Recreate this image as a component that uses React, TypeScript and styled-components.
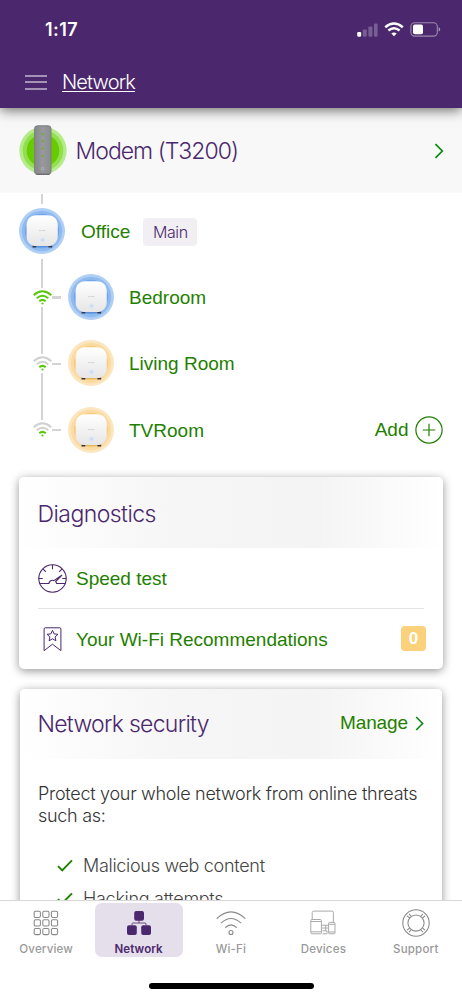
import React from "react";
import styled, { createGlobalStyle, css } from "styled-components";

const purple = "#4b286d";
const green = "#1f8000";

const GlobalStyle = createGlobalStyle`
  * { box-sizing: border-box; }
  html, body { margin: 0; padding: 0; background: #fff; }
  body { overflow: hidden; font-family: "Liberation Sans", Arial, sans-serif; }
  svg { display: block; flex: none; }
`;

const light = css`
  font-family: Inter, "Liberation Sans", sans-serif;
  font-weight: 300;
`;

const Screen = styled.div`
  width: 462px;
  height: 999px;
  display: flex;
  flex-direction: column;
  overflow: hidden;
  background: #fff;
`;

const Header = styled.header`
  flex: none;
  height: 108px;
  background: ${purple};
  box-shadow: 0 2px 12px rgba(0, 0, 0, 0.6);
  z-index: 2;
  color: #fff;
`;

const StatusBar = styled.div`
  height: 58px;
  padding: 1px 21px 0 45px;
  display: flex;
  align-items: center;
  justify-content: space-between;
`;

const Time = styled.span`
  font: 600 18px/20px Inter, sans-serif;
  letter-spacing: 0.4px;
`;

const StatusIcons = styled.div`
  display: flex;
  align-items: center;
  gap: 6px;
`;

const TitleBar = styled.div`
  display: flex;
  align-items: center;
  height: 48px;
  padding-left: 25px;
  gap: 15px;
`;

const Burger = styled.div`
  width: 22px;
  height: 15px;
  display: flex;
  flex-direction: column;
  justify-content: space-between;
`;

const BurgerLine = styled.i`
  height: 2px;
  background: #a593b6;
`;

const PageTitle = styled.h1`
  ${light}
  margin: 0;
  font-size: 20px;
  line-height: 24px;
  letter-spacing: -0.85px;
  text-decoration: underline;
  text-decoration-thickness: 1px;
  text-underline-offset: 2px;
`;

const Content = styled.main`
  flex: 1;
  min-height: 0;
  overflow: hidden;
`;

const ModemRow = styled.section`
  height: 85px;
  padding: 0 18px 0 19px;
  display: flex;
  align-items: center;
  background: #f8f8f8;
`;

const ModemName = styled.h2`
  ${light}
  flex: 1;
  margin: 1px 0 0 8.500px;
  color: ${purple};
  font-size: 23px;
  line-height: 28px;
  letter-spacing: -0.980px;
`;

const Tree = styled.section`
  height: 284px;
  padding: 1px 19px 0 19px;
`;

const RailLine = styled.i<{ $h: number }>`
  display: block;
  width: 2.4px;
  height: ${(p) => p.$h}px;
  background: #d4d4d4;
`;

const TopLink = styled.div`
  height: 14px;
  padding-left: 22px;
`;

const MainNode = styled.div`
  height: 46px;
  display: flex;
  align-items: center;
`;

const NodeName = styled.span<{ $gap: number }>`
  margin-left: ${(p) => p.$gap}px;
  padding-top: 2px;
  font-size: 19px;
  line-height: 24px;
  color: ${green};
`;

const MainTag = styled.span`
  ${light}
  margin: 1px 0 0 13px;
  width: 54px;
  height: 28px;
  border-radius: 4px;
  background: #f2eff4;
  color: ${purple};
  font-size: 16px;
  line-height: 28px;
  text-align: center;
  letter-spacing: -0.4px;
`;

const Branches = styled.div`
  display: flex;
  padding-top: 5px;
`;

const Rail = styled.div`
  width: 49px;
  padding-left: 14px;
`;

const RailStem = styled.div`
  padding-left: 8px;
`;

const WifiLink = styled.div`
  height: 19px;
  display: flex;
  align-items: center;
`;

const Tick = styled.i`
  width: 9px;
  height: 2.4px;
  margin: 1px 0 0 0;
  background: #d4d4d4;
`;

const Rooms = styled.div`
  flex: 1;
  padding-top: 5px;
`;

const RoomRow = styled.div`
  height: 66.3px;
  padding-bottom: 0.3px;
  display: flex;
  align-items: center;
`;

const AddLink = styled.span`
  margin-left: auto;
  padding-right: 0.5px;
  display: flex;
  align-items: center;
  gap: 6px;
  font-size: 19px;
  line-height: 26px;
  color: ${green};
`;

const Card = styled.section<{ $inset?: boolean }>`
  margin: 0 ${(p) => (p.$inset ? "20px 20px 20px" : "19px 20px 19px")};
  height: ${(p) => (p.$inset ? 320 : 192)}px;
  border-radius: 5px;
  background: #fff;
  box-shadow: 0 2px 10px rgba(0, 0, 0, 0.42);
  overflow: hidden;
`;

const CardHead = styled.div<{ $side: number; $top: number; $h: number }>`
  height: ${(p) => p.$h}px;
  padding: ${(p) => p.$top}px ${(p) => p.$side}px 0;
  display: flex;
  align-items: center;
  justify-content: space-between;
  background: linear-gradient(90deg, #fff 0%, #f6f6f6 36%, #f4f4f4 70%, #fff 100%);
`;

const CardTitle = styled.h2<{ $track: number }>`
  ${light}
  margin: 0 0 0 -0.5px;
  font-size: 23px;
  line-height: 28px;
  letter-spacing: ${(p) => p.$track}px;
  color: ${purple};
`;

const ActionRow = styled.div`
  height: 61px;
  margin: 0 19px;
  display: flex;
  align-items: center;
  border-bottom: 1px solid #e4e4e4;
`;

const IconSlot = styled.div`
  width: 38px;
  flex: none;
`;

const ActionText = styled.span`
  padding-top: 2px;
  font-size: 19px;
  line-height: 24px;
  color: ${green};
`;

const CountBadge = styled.span`
  width: 25px;
  height: 25px;
  margin: -1px -2px 0 auto;
  border-radius: 4px;
  background: #fcd17b;
  color: #fff;
  font-size: 17px;
  font-weight: 700;
  line-height: 26px;
  text-align: center;
`;

const Manage = styled.span`
  display: flex;
  align-items: center;
  gap: 7px;
  margin-top: -2px;
  font-size: 19px;
  line-height: 24px;
  letter-spacing: -0.1px;
  color: ${green};
`;

const Intro = styled.p`
  ${light}
  margin: 24px 10px 0 18px;
  font-size: 18px;
  line-height: 22px;
  letter-spacing: -0.280px;
  color: #333;
  white-space: pre-line;
`;

const Threats = styled.ul`
  margin: 22px 0 0;
  padding: 0 0 0 37px;
  list-style: none;
`;

const Threat = styled.li`
  ${light}
  height: 33px;
  display: flex;
  align-items: center;
  gap: 10px;
  font-size: 18px;
  line-height: 24px;
  letter-spacing: -0.300px;
  color: #444;
`;

const TabBar = styled.nav`
  flex: none;
  height: 99px;
  border-top: 1px solid #d8d8d8;
  background: #fff;
  z-index: 2;
`;

const Tabs = styled.div`
  display: grid;
  grid-template-columns: repeat(5, 1fr);
  height: 79px;
  padding-top: 2px;
`;

const Tab = styled.div<{ $active?: boolean }>`
  width: 88px;
  height: 54px;
  margin: 0 auto;
  border-radius: 7px;
  display: flex;
  flex-direction: column;
  align-items: center;
  background: ${(p) => (p.$active ? "#e5deeb" : "transparent")};
  color: ${(p) => (p.$active ? purple : "#999")};
  font: ${(p) => (p.$active ? 600 : 500)} 11.500px/16px Inter, sans-serif;
  letter-spacing: ${(p) => (p.$active ? 0.1 : 0.2)}px;
`;

const TabIcon = styled.div`
  height: 39px;
  padding-top: 2px;
  margin-bottom: 1px;
  display: flex;
  align-items: center;
`;

const HomeIndicator = styled.div`
  width: 165px;
  height: 6px;
  margin: 3px auto 0;
  border-radius: 3px;
  background: #000;
`;

const Chevron = ({ w = 9, h = 15 }: { w?: number; h?: number }) => (
  <svg width={w} height={h} viewBox="0 0 9 15" fill="none" stroke="#078a12" strokeWidth="1.6">
    <path d="M1.2 1 7.6 7.5 1.2 14" />
  </svg>
);

const Signal = () => (
  <svg width="21" height="14" viewBox="0 0 21 14" fill="#fff">
    <rect x="0.2" y="9" width="4" height="4.7" rx="1.1" />
    <g opacity="0.25">
      <rect x="5.8" y="6.5" width="4" height="7.2" rx="1.1" />
      <rect x="11.4" y="3.5" width="4" height="10.2" rx="1.1" />
      <rect x="17" y="0.5" width="3.6" height="13.2" rx="1.1" />
    </g>
  </svg>
);

const StatusWifi = () => (
  <svg width="20" height="15" viewBox="0 0 20 15" fill="none" stroke="#fff" strokeWidth="2.5">
    <path d="M1.2 5.2Q10-2.2 18.8 5.2M4.4 8.5q5.600-4.400 11.200 0" />
    <path d="M7.300 11.400 10 14.200l2.700-2.800q-2.700-2-5.400 0z" fill="#fff" stroke="none" />
  </svg>
);

const Battery = () => (
  <svg width="31" height="15" viewBox="0 0 31 15">
    <rect x="0.9" y="0.7" width="26.4" height="13.4" rx="3.8" fill="none" stroke="#fff" strokeOpacity="0.45" strokeWidth="1.1" />
    <path d="M28.600 5.200q1.600.600 1.600 2.200t-1.600 2.200z" fill="#fff" opacity="0.5" />
    <rect x="3" y="2.600" width="10" height="9.600" rx="1.800" fill="#fff" />
  </svg>
);

const ModemIcon = () => (
  <svg width="48" height="51" viewBox="0 0 48 51">
    <defs>
      <linearGradient id="modem" x2="1">
        <stop stopColor="#85878a" />
        <stop offset="0.5" stopColor="#97999c" />
        <stop offset="1" stopColor="#8a8c8f" />
      </linearGradient>
    </defs>
    <circle cx="24" cy="25.500" r="23.700" fill="#b5eb8b" />
    <circle cx="24" cy="25.500" r="20.300" fill="#91df4c" />
    <circle cx="24" cy="25.500" r="16.300" fill="#66cc00" />
    <rect x="15.600" y="0.800" width="16.400" height="48.600" rx="2.800" fill="url(#modem)" stroke="#7d7f82" />
    <path d="M17.200 49.200h13.400" stroke="#66686b" strokeWidth="1.100" />
    <path d="M23.700 8v2M22.700 9h2M23.700 15.200v2M22.700 16.200h2M23.700 22.500v2M22.700 23.500h2M23.700 30v2M22.700 31h2" stroke="#58b81c" strokeWidth="1" />
    <circle cx="23.600" cy="43.800" r="1.300" fill="none" stroke="#b9bbbd" strokeWidth="0.700" />
  </svg>
);

type Tone = "blue" | "amber";
const tones: Record<Tone, string[]> = {
  blue: ["#afcff4", "#8fbaf0", "#70a5eb", "#568fdc"],
  amber: ["#fce6bf", "#fbdba1", "#f9cc7c", "#e7b55e"],
};

const RouterIcon = ({ tone }: { tone: Tone }) => (
  <svg width="46" height="46" viewBox="0 0 46 46">
    <defs>
      <linearGradient id={`shell-${tone}`} x2="0" y2="1">
        <stop stopColor="#fff" />
        <stop offset="1" stopColor="#e6e6e7" />
      </linearGradient>
      <radialGradient id={`glow-${tone}`}>
        <stop stopColor="#b5d3f5" />
        <stop offset="1" stopColor="#e9edf2" stopOpacity="0" />
      </radialGradient>
    </defs>
    <circle cx="23" cy="23" r="23" fill={tones[tone][0]} />
    <circle cx="23" cy="23" r="20.200" fill={tones[tone][1]} />
    <circle cx="23" cy="23" r="17.200" fill={tones[tone][2]} />
    <path d="M7 19q-1 12 6.500 18.700h19.500Q40 31 39 19z" fill={tones[tone][3]} />
    <path d="M14 38.500h19" stroke={tones[tone][3]} strokeWidth="1.200" />
    <path d="M13.500 38.600h3.800M29.400 38.600h3.800" stroke="#33373f" strokeWidth="1.900" />
    <path d="M17.500 7.200h11C35.500 7.200 38.800 11.600 38.800 18v9.500c0 6.700-4.200 10.600-10.300 10.600h-11C11.400 38.100 7.500 34.200 7.500 27.500V18C7.500 11.600 10.800 7.200 17.500 7.200z" fill={`url(#shell-${tone})`} />
    <circle cx="23.500" cy="32" r="3.800" fill={`url(#glow-${tone})`} />
    <path d="M20 22.600h2.500m.5 0h3.500" stroke="#cfcfd1" strokeWidth="0.900" />
  </svg>
);

const LinkWifi = ({ strong }: { strong?: boolean }) => {
  const g = "#57c80b";
  const outer = strong ? g : "#d0d0d0";
  return (
    <svg width="19" height="15" viewBox="0 0 19 15" fill="none" strokeWidth="1.9">
      <path d="M.7 5.200Q9.500-2.600 18.300 5.200" stroke={outer} />
      <path d="M3.700 8.200q5.800-5 11.600 0" stroke={outer} />
      <path d="M6.300 11.200q3.200-2.800 6.400 0" stroke={g} strokeWidth="2.100" />
      <circle cx="9.500" cy="13.500" r="1.100" fill={g} />
    </svg>
  );
};

const PlusIcon = () => (
  <svg width="28" height="28" viewBox="0 0 28 28" fill="none" stroke={green} strokeWidth="1.2">
    <circle cx="14" cy="14" r="13.100" />
    <path d="M14 7.700v12.600M7.700 14h12.600" />
  </svg>
);

const GaugeIcon = () => (
  <svg width="29" height="29" viewBox="0 0 29 29" fill="none" stroke={purple} strokeWidth="1.100">
    <circle cx="14.500" cy="14.500" r="13.700" />
    <path d="M14.500.800v4.500M5.100 5.100l2.800 2.800M23.900 5.100l-2.800 2.800M.800 14.500h4M28.200 14.500h-4" />
    <path d="M1.500 19.500h9.300q.8-3.200 3.700-3.200.8 0 1.300.3l8-5.300-6.200 6.200q.7.800 1 2h8.900" strokeLinejoin="round" />
  </svg>
);

const BookmarkIcon = () => (
  <svg width="29" height="25" viewBox="0 0 29 25" fill="none" stroke={purple} strokeWidth="1">
    <path d="M7.300.800h14.400q1.200 0 1.200 1.200v21.700l-8.400-6.500-8.400 6.500V2Q6.100.800 7.300.800z" />
    <path d="m14.500 3.300 1.600 3.600 3.900.4-2.900 2.600.8 3.900-3.400-2-3.400 2 .8-3.900L9 7.300l3.900-.4z" />
  </svg>
);

const CheckIcon = () => (
  <svg width="16" height="13" viewBox="0 0 16 13" fill="none" stroke={green} strokeWidth="1.900">
    <path d="m1 7.100 4.200 4.200L15 1.300" />
  </svg>
);

const OverviewIcon = () => (
  <svg width="26" height="26" viewBox="0 0 26 26" fill="none" stroke="#888" strokeWidth="1.050">
    {[1.200, 9.800, 18.400].map((y) =>
      [1.200, 9.800, 18.400].map((x) => <rect key={`${x}-${y}`} x={x} y={y} width="6.200" height="6.200" rx="1.300" />)
    )}
  </svg>
);

const NetworkIcon = () => (
  <svg width="26" height="26" viewBox="0 0 26 26" fill={purple}>
    <rect x="8.200" y="1" width="9.800" height="9.800" rx="2" />
    <rect x="1" y="15.200" width="9.800" height="9.800" rx="2" />
    <rect x="15.200" y="15.200" width="9.800" height="9.800" rx="2" />
    <path d="M13 10v3M6 15.500V14q0-1 1-1h12q1 0 1 1v1.500" fill="none" stroke={purple} strokeWidth="0.800" />
  </svg>
);

const WifiTabIcon = () => (
  <svg width="30" height="26" viewBox="0 0 30 26" fill="none" stroke="#888" strokeWidth="1.100">
    <path d="M.7 8.700Q15-4.800 29.300 8.700M4.900 13.200q10.100-9.400 20.200 0M9.200 17.600q5.800-5.400 11.600 0" />
    <circle cx="15" cy="22.500" r="2" />
  </svg>
);

const DevicesTabIcon = () => (
  <svg width="26" height="25" viewBox="0 0 26 25" fill="none" stroke="#aaa" strokeWidth="1">
    <path d="M2.200 9.500V2.700q0-1.600 1.600-1.600h18q1.600 0 1.600 1.600v9.600M12 15.300h6.500M12 18h6.500M15.700 15.300v5.500M12.500 20.800h4.500v3h-4.500" />
    <rect x="0.800" y="9.500" width="10.600" height="14.300" rx="1.100" />
    <path d="M.8 11.500h10.600M.8 21.800h10.600M18.600 14.300h6.400M18.600 22h6.400" />
    <rect x="18.600" y="12.400" width="6.400" height="11.400" rx="1" />
  </svg>
);

const SupportIcon = () => (
  <svg width="28" height="28" viewBox="0 0 28 28" fill="none" stroke="#888" strokeWidth="1.050">
    <circle cx="14" cy="14" r="13.200" />
    <circle cx="14" cy="14" r="8.100" />
    <path d="M5 6.800 7.800 9M7 4.800l2.500 2.700M20.500 9 23 6.800M18.500 7.500 21 4.800M5 21.200 7.800 19M7 23.200l2.500-2.700M20.500 19l2.500 2.200M18.500 20.500l2.500 2.700" />
  </svg>
);

const rooms: { name: string; tone: Tone }[] = [
  { name: "Bedroom", tone: "blue" },
  { name: "Living Room", tone: "amber" },
  { name: "TVRoom", tone: "amber" },
];

const tabs = [
  { label: "Overview", icon: <OverviewIcon /> },
  { label: "Network", icon: <NetworkIcon />, active: true },
  { label: "Wi-Fi", icon: <WifiTabIcon /> },
  { label: "Devices", icon: <DevicesTabIcon /> },
  { label: "Support", icon: <SupportIcon /> },
];

export default function App() {
  return (
    <>
      <GlobalStyle />
      <Screen>
        <Header>
          <StatusBar>
            <Time>1:17</Time>
            <StatusIcons>
              <Signal />
              <StatusWifi />
              <Battery />
            </StatusIcons>
          </StatusBar>
          <TitleBar>
            <Burger>
              <BurgerLine />
              <BurgerLine />
              <BurgerLine />
            </Burger>
            <PageTitle>Network</PageTitle>
          </TitleBar>
        </Header>

        <Content>
          <ModemRow>
            <ModemIcon />
            <ModemName>Modem (T3200)</ModemName>
            <Chevron w={10} h={16} />
          </ModemRow>

          <Tree>
            <TopLink>
              <RailLine $h={10} />
            </TopLink>
            <MainNode>
              <RouterIcon tone="blue" />
              <NodeName $gap={16}>Office</NodeName>
              <MainTag>Main</MainTag>
            </MainNode>
            <Branches>
              <Rail>
                {rooms.map((room, i) => (
                  <React.Fragment key={room.name}>
                    <RailStem>
                      <RailLine $h={i === 0 ? 28.5 : 47.3} />
                    </RailStem>
                    <WifiLink>
                      <LinkWifi strong={i === 0} />
                      <Tick />
                    </WifiLink>
                  </React.Fragment>
                ))}
              </Rail>
              <Rooms>
                {rooms.map((room, i) => (
                  <RoomRow key={room.name}>
                    <RouterIcon tone={room.tone} />
                    <NodeName $gap={15}>{room.name}</NodeName>
                    {i === rooms.length - 1 && (
                      <AddLink>
                        Add
                        <PlusIcon />
                      </AddLink>
                    )}
                  </RoomRow>
                ))}
              </Rooms>
            </Branches>
          </Tree>

          <Card>
            <CardHead $side={19} $top={2} $h={71}>
              <CardTitle $track={-0.55}>Diagnostics</CardTitle>
            </CardHead>
            <ActionRow>
              <IconSlot>
                <GaugeIcon />
              </IconSlot>
              <ActionText>Speed test</ActionText>
            </ActionRow>
            <ActionRow>
              <IconSlot>
                <BookmarkIcon />
              </IconSlot>
              <ActionText>Your Wi-Fi Recommendations</ActionText>
              <CountBadge>0</CountBadge>
            </ActionRow>
          </Card>

          <Card $inset>
            <CardHead $side={18} $top={0} $h={70}>
              <CardTitle $track={-0.72}>Network security</CardTitle>
              <Manage>
                Manage
                <Chevron />
              </Manage>
            </CardHead>
            <Intro>{"Protect your whole network from online threats\nsuch as:"}</Intro>
            <Threats>
              {["Malicious web content", "Hacking attempts"].map((t) => (
                <Threat key={t}>
                  <CheckIcon />
                  {t}
                </Threat>
              ))}
            </Threats>
          </Card>
        </Content>

        <TabBar>
          <Tabs>
            {tabs.map((t) => (
              <Tab key={t.label} $active={t.active}>
                <TabIcon>{t.icon}</TabIcon>
                {t.label}
              </Tab>
            ))}
          </Tabs>
          <HomeIndicator />
        </TabBar>
      </Screen>
    </>
  );
}
